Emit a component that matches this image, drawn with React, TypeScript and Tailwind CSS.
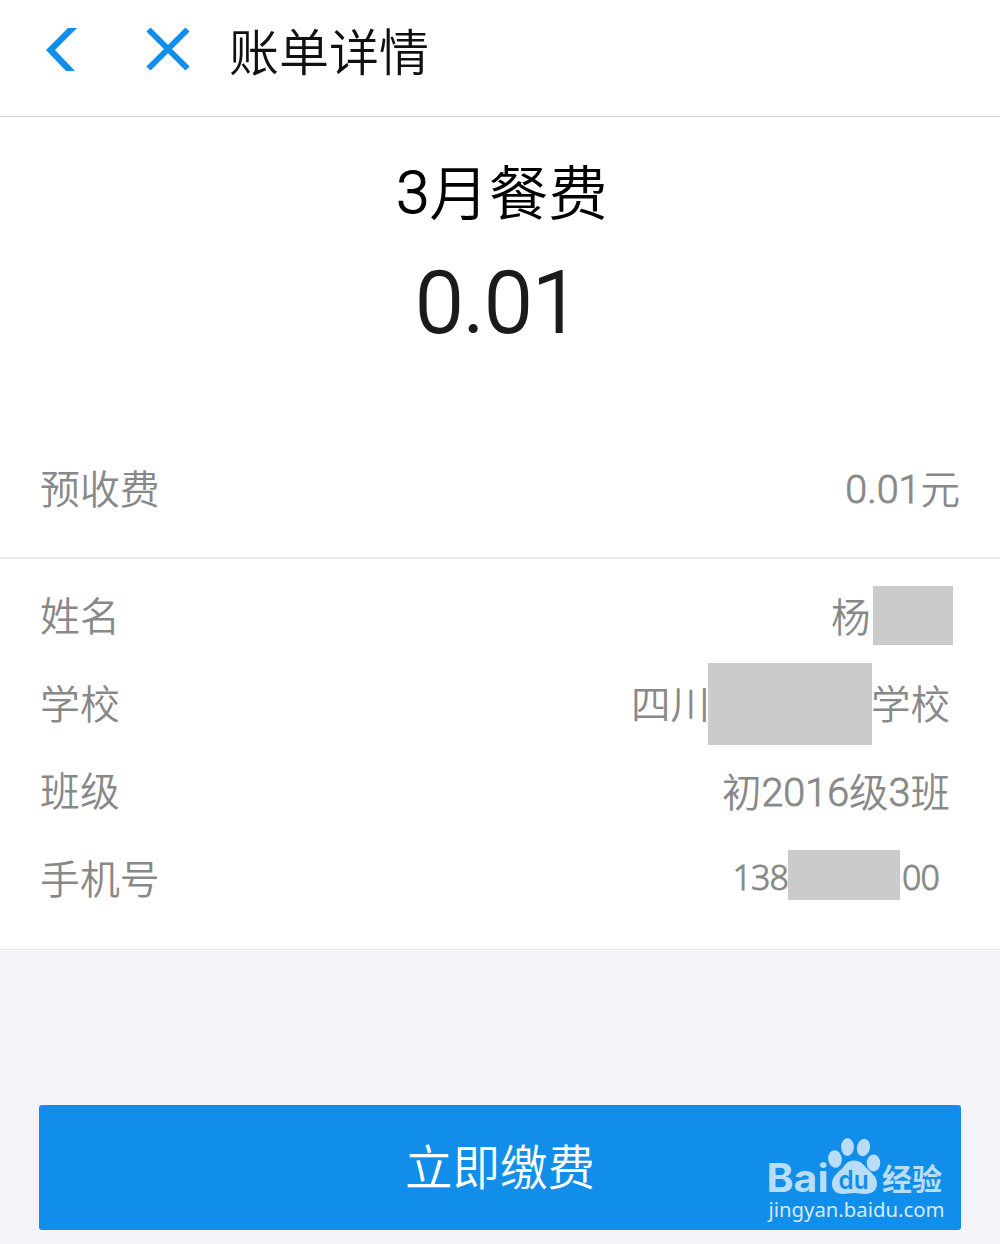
const details = [
  {
    label: "姓名",
    value: (
      <>
        <span className="w-[42px] pt-[6px]">杨</span>
        <span className="h-[59px] w-20 bg-[#cbcbcb]" />
      </>
    ),
    className: "pr-[47px]",
  },
  {
    label: "学校",
    value: (
      <>
        <span className="pt-[3px]">四川</span>
        <span className="-ml-[2px] h-[82px] w-[164px] bg-[#cbcbcb]" />
        <span className="-ml-[1px] pt-[3px]">学校</span>
      </>
    ),
    className: "pr-[50px] pt-[1px]",
  },
  {
    label: "班级",
    value: (
      <span className="pt-[4px]">
        初<span className="align-[1px] [-webkit-text-stroke:0.8px]">2016</span>级
        <span className="align-[1px] [-webkit-text-stroke:0.8px]">3</span>班
      </span>
    ),
    className: "pr-[50px]",
  },
  {
    label: "手机号",
    value: (
      <span className="-mt-[7px] flex items-center font-['Noto_Sans'] text-[34px] tracking-[-0.9px] [-webkit-text-stroke:0.8px]">
        <span className="pt-[5px]">138</span>
        <span className="mr-[2px] h-[50px] w-28 bg-[#cbcbcb]" />
        <span className="pt-[5px]">00</span>
      </span>
    ),
    className: "pr-[61px]",
  },
];

function Header() {
  return (
    <header className="flex h-[117px] items-start border-b border-[#d2d2d2] pl-[46px] pt-[26px]">
      <button className="mt-[1.5px]" aria-label="返回">
        <svg width="31" height="43" viewBox="0 0 31 43" fill="#118eea">
          <path d="M22 0h9L9 22l20 21h-9L0 22z" />
        </svg>
      </button>
      <button className="ml-[69px] mt-[1px]" aria-label="关闭">
        <svg width="44" height="44" viewBox="0 0 44 44" fill="none" stroke="#118eea" strokeWidth="6">
          <path d="M2.500 2.500l39 39M41.500 2.500l-39 39" />
        </svg>
      </button>
      <h1 className="ml-[39px] mt-[3px] text-[50px] leading-[50px] text-[#111]">账单详情</h1>
    </header>
  );
}

function Watermark() {
  return (
    <svg
      className="absolute right-[13px] top-[31px]"
      width="182"
      height="94"
      viewBox="0 0 182 94"
      fill="#b9dcf8"
      aria-hidden="true"
    >
      <text x="0.500" y="56" fontFamily="Inter" fontWeight="700" fontSize="39" textLength="62" lengthAdjust="spacingAndGlyphs">Bai</text>
      <ellipse cx="69" cy="23" rx="6.8" ry="8.8" transform="rotate(-8 69 23)" />
      <ellipse cx="81.500" cy="11" rx="6.4" ry="9" />
      <ellipse cx="97.500" cy="11.500" rx="6.5" ry="8.800" transform="rotate(12 97.500 11.500)" />
      <ellipse cx="107.500" cy="27" rx="6.8" ry="8.500" />
      <path d="M88 24.500c7 0 9 4 13 8s10 8 10 15-5 10.500-12 10.500c-4 0-7-1-11-1s-7 1-11 1c-7 0-11-4-11-10.500 0-7 6-11 10-15s5-8 12-8z" />
      <text x="72.500" y="52.500" fontFamily="Inter" fontWeight="600" fontSize="25" fill="#118eea" textLength="30" lengthAdjust="spacingAndGlyphs">du</text>
      <text x="116" y="54" fontFamily="Noto Sans CJK SC" fontWeight="700" fontSize="30">经验</text>
      <text x="2.500" y="80.500" fontFamily="Noto Sans" fontWeight="400" fontSize="20" textLength="176" lengthAdjust="spacingAndGlyphs" fill="#d5eafb">jingyan.baidu.com</text>
    </svg>
  );
}

export default function App() {
  return (
    <div className="flex h-[1244px] w-[1000px] flex-col overflow-hidden bg-[#f4f3f9] font-[Roboto,'Noto_Sans_CJK_SC',sans-serif] font-[350]">
      <div className="bg-white pb-[1px]">
        <Header />

        {/* Amount */}
        <section className="flex h-[305px] flex-col items-center pt-[42px]">
          <h2 className="pl-[4px] text-[59.5px] leading-[72px] text-black">
            <span className="align-[2px] leading-none [-webkit-text-stroke:1.2px]">3</span>月餐费
          </h2>
          <p className="mt-5 pr-[4px] text-[86px] leading-[104px] tracking-[0.3px] [-webkit-text-stroke:2px] text-[#1b1b1b]">0.01</p>
        </section>

        <section className="flex h-[137px] items-center justify-between border-b-2 border-[#e9e9e9] px-10 text-[39.5px] text-[#888]">
          <span className="pt-[2px] text-[39.900px]">预收费</span>
          <span className="pt-[2px]"><span className="align-[1px] [-webkit-text-stroke:0.8px]">0.01</span>元</span>
        </section>

        {/* Student details */}
        <section className="flex h-[391px] flex-col border-b border-[#e3e3e5] pt-[13px] text-[39.5px] text-[#888]">
          {details.map((row) => (
            <div key={row.label} className={`flex h-[87.500px] items-center justify-between pl-10 ${row.className}`}>
              <span className="pt-[5px] text-[39.900px]">{row.label}</span>
              <div className="flex items-center">{row.value}</div>
            </div>
          ))}
        </section>
      </div>

      <div className="px-[39px] pt-[154px]">
        <button className="relative flex h-[125px] w-full items-center justify-center rounded-[3px] bg-[#118eea] pt-[4px] text-[47.5px] text-white">
          立即缴费
          <Watermark />
        </button>
      </div>
    </div>
  );
}
